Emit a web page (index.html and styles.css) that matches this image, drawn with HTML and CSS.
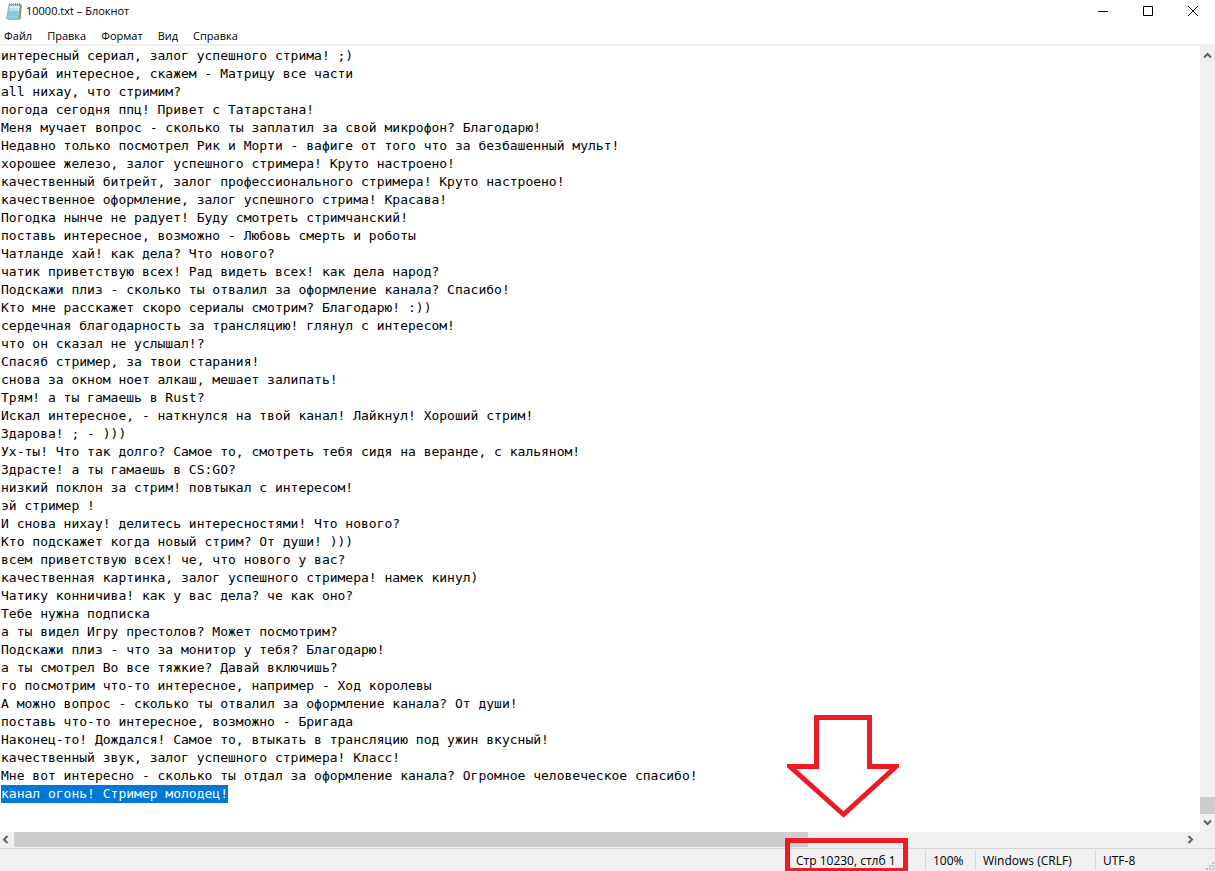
FILE: index.html
```
<!DOCTYPE html>
<html lang="ru">
<head>
  <meta charset="UTF-8" />
  <title>10000.txt – Блокнот</title>
  <link rel="stylesheet" href="styles.css">
</head>
<body>
  <header class="titlebar">
    <svg class="app-icon" width="16" height="18" viewBox="0 0 16 18">
      <path d="M13.500 3 16 2.500 14.500 17.500 2 17.500Z" fill="#a48a63"/>
      <path d="M3 2.500H14.500L12.500 17H.5Z" fill="#8fcfde" stroke="#6ba3b5" stroke-width=".6"/>
      <path d="M3.500 4H13.500L12.800 9H2.800Z" fill="#d3f0f5"/>
      <path d="M3 7h9M2.700 9h9M2.400 11h9M2 13h9" stroke="#76bccd" stroke-width=".6"/>
      <path d="M3.500 1v3M5.500 1v3M7.500 1v3M9.500 1v3M11.500 1v3M13.500 1v3" stroke="#7f9298" stroke-width=".8"/>
    </svg>
    <span class="title">10000.txt – Блокнот</span>
    <div class="window-buttons">
      <button type="button" aria-label="Свернуть">
        <svg width="10" height="10" viewBox="0 0 10 10"><path d="M0 5.500h10"/></svg>
      </button>
      <button type="button" aria-label="Развернуть">
        <svg width="10" height="10" viewBox="0 0 10 10"><path d="M.5 .5h9v9h-9z"/></svg>
      </button>
      <button type="button" aria-label="Закрыть">
        <svg width="10" height="10" viewBox="0 0 10 10"><path d="M0 0l10 10M10 0L0 10"/></svg>
      </button>
    </div>
  </header>

  <nav class="menu">
    <button type="button">Файл</button>
    <button type="button">Правка</button>
    <button type="button">Формат</button>
    <button type="button">Вид</button>
    <button type="button">Справка</button>
  </nav>

  <main class="editor">
    <textarea id="text" wrap="off" spellcheck="false" aria-label="Текст">интересный сериал, залог успешного стрима! ;)
врубай интересное, скажем - Матрицу все части
all нихау, что стримим?
погода сегодня ппц! Привет с Татарстана!
Меня мучает вопрос - сколько ты заплатил за свой микрофон? Благодарю!
Недавно только посмотрел Рик и Морти - вафиге от того что за безбашенный мульт!
хорошее железо, залог успешного стримера! Круто настроено!
качественный битрейт, залог профессионального стримера! Круто настроено!
качественное оформление, залог успешного стрима! Красава!
Погодка нынче не радует! Буду смотреть стримчанский!
поставь интересное, возможно - Любовь смерть и роботы
Чатланде хай! как дела? Что нового?
чатик приветствую всех! Рад видеть всех! как дела народ?
Подскажи плиз - сколько ты отвалил за оформление канала? Спасибо!
Кто мне расскажет скоро сериалы смотрим? Благодарю! :))
сердечная благодарность за трансляцию! глянул с интересом!
что он сказал не услышал!?
Спасяб стример, за твои старания!
снова за окном ноет алкаш, мешает залипать!
Трям! а ты гамаешь в Rust?
Искал интересное, - наткнулся на твой канал! Лайкнул! Хороший стрим!
Здарова! ; - )))
Ух-ты! Что так долго? Самое то, смотреть тебя сидя на веранде, с кальяном!
Здрасте! а ты гамаешь в CS:GO?
низкий поклон за стрим! повтыкал с интересом!
эй стример !
И снова нихау! делитесь интересностями! Что нового?
Кто подскажет когда новый стрим? От души! )))
всем приветствую всех! че, что нового у вас?
качественная картинка, залог успешного стримера! намек кинул)
Чатику конничива! как у вас дела? че как оно?
Тебе нужна подписка
а ты видел Игру престолов? Может посмотрим?
Подскажи плиз - что за монитор у тебя? Благодарю!
а ты смотрел Во все тяжкие? Давай включишь?
го посмотрим что-то интересное, например - Ход королевы
А можно вопрос - сколько ты отвалил за оформление канала? От души!
поставь что-то интересное, возможно - Бригада
Наконец-то! Дождался! Самое то, втыкать в трансляцию под ужин вкусный!
качественный звук, залог успешного стримера! Класс!
Мне вот интересно - сколько ты отдал за оформление канала? Огромное человеческое спасибо!
канал огонь! Стример молодец!</textarea>

    <div class="scroll scroll-y">
      <svg width="9" height="7" viewBox="0 0 9 7"><path d="M1 5.500l3.500-3.500L8 5.500"/></svg>
      <div class="track"><div class="thumb"></div></div>
      <svg width="9" height="7" viewBox="0 0 9 7"><path d="M1 1.500l3.500 3.500L8 1.500"/></svg>
    </div>
    <div class="scroll scroll-x">
      <svg width="7" height="9" viewBox="0 0 7 9"><path d="M5.500 1L2 4.500 5.500 8"/></svg>
      <div class="track"><div class="thumb"></div></div>
      <svg width="7" height="9" viewBox="0 0 7 9"><path d="M1.500 1L5 4.500 1.500 8"/></svg>
    </div>
  </main>

  <footer class="status">
    <div class="cell position">
      Стр 10230, стлб 1
      <div class="mark-box"></div>
      <svg class="mark-arrow" width="112" height="104" viewBox="0 0 112 104">
        <path d="M29.500 3.500h53v49H109L56.500 100.500 3 52.500h26.500z"/>
      </svg>
    </div>
    <div class="cell zoom">100%</div>
    <div class="cell">Windows (CRLF)</div>
    <div class="cell">UTF-8</div>
    <svg class="grip" width="9" height="9" viewBox="0 0 9 9">
      <path d="M6 0h2v2H6zM3 3h2v2H3zM6 3h2v2H6zM0 6h2v2H0zM3 6h2v2H3zM6 6h2v2H6z"/>
    </svg>
  </footer>

  <script src="notepad.js"></script>
</body>
</html>
```
FILE: styles.css
```
* {
  box-sizing: border-box;
}
body {
  margin: 0;
  height: 100vh;
  display: flex;
  flex-direction: column;
  overflow: hidden;
  background: #fff;
  color: #000;
  font-family: "Open Sans", "Noto Sans", sans-serif;
  font-size: 11px;
}
button {
  border: none;
  padding: 0;
  background: none;
  color: inherit;
  font: inherit;
}

.titlebar {
  display: flex;
  align-items: center;
  height: 21px;
  padding-left: 6px;
}
.title {
  flex: 1;
  margin-left: 4px;
}
.window-buttons {
  display: flex;
}
.window-buttons button {
  display: flex;
  align-items: center;
  justify-content: center;
  width: 45px;
  height: 20px;
}
.window-buttons svg {
  fill: none;
  stroke: #000;
}

.menu {
  display: flex;
  gap: 15px;
  height: 25px;
  padding: 6px 4px 0;
  border-bottom: 2px solid #f0f0f0;
}

.editor {
  flex: 1;
  display: grid;
  grid-template-columns: 1fr 15px;
  grid-template-rows: 1fr 15px;
  min-height: 0;
  background: #f0f0f0;
}
#text {
  width: 100%;
  height: 100%;
  margin: 0;
  padding: 1px 1px 0;
  border: none;
  outline: none;
  resize: none;
  overflow: hidden;
  background: #fff;
  color: #000;
  caret-color: transparent;
  font-family: "DejaVu Sans Mono", "Liberation Mono", monospace;
  font-size: 13px;
  line-height: 18px;
}
#text::selection {
  background: #0078d7;
  color: #fff;
}

/* scrollbars */
.scroll {
  display: flex;
  align-items: center;
}
.scroll svg {
  flex: none;
  fill: none;
  stroke: #606060;
  stroke-width: 2;
}
.scroll .track {
  flex: 1;
  display: flex;
}
.scroll .thumb {
  background: #cdcdcd;
}
.scroll-y {
  flex-direction: column;
  padding: 6px 0;
}
.scroll-y .track {
  width: 100%;
  flex-direction: column;
  justify-content: flex-end;
  padding-bottom: 5px;
}
.scroll-y .thumb {
  height: 17px;
}
.scroll-x {
  padding: 0 6px 0 2px;
}
.scroll-x .track {
  height: 100%;
  padding: 0 5px;
}
.scroll-x .thumb {
  width: 68%;
}

/* status bar */
.status {
  position: relative;
  display: flex;
  justify-content: flex-end;
  height: 23px;
  padding: 1px 0;
  margin-top: 1px;
  border-top: 1px solid #d7d7d7;
  background: #f0f0f0;
  box-shadow: 0 -1px #f0f0f0;
  font-size: 12px;
}
.cell {
  width: 120px;
  padding-left: 7px;
  border-left: 1px solid #d7d7d7;
  line-height: 21px;
  white-space: nowrap;
}
.cell.position {
  position: relative;
  width: 137px;
}
.cell.zoom {
  width: 50px;
}
.grip {
  position: absolute;
  right: 0;
  bottom: 0;
  fill: #bfbfbf;
}

/* red marks over the line counter */
.mark-box {
  position: absolute;
  left: -4px;
  bottom: -3px;
  width: 123px;
  height: 35px;
  border: 5px solid #ed1c24;
}
.mark-arrow {
  position: absolute;
  left: -2px;
  bottom: 52px;
  fill: none;
  stroke: #ed1c24;
  stroke-width: 5;
}
```
FILE: notepad.js
```
const text = document.getElementById('text');
const lastLine = text.value.lastIndexOf('\n') + 1;

// last line is selected
text.focus({ preventScroll: true });
text.setSelectionRange(lastLine, text.value.length);
```
